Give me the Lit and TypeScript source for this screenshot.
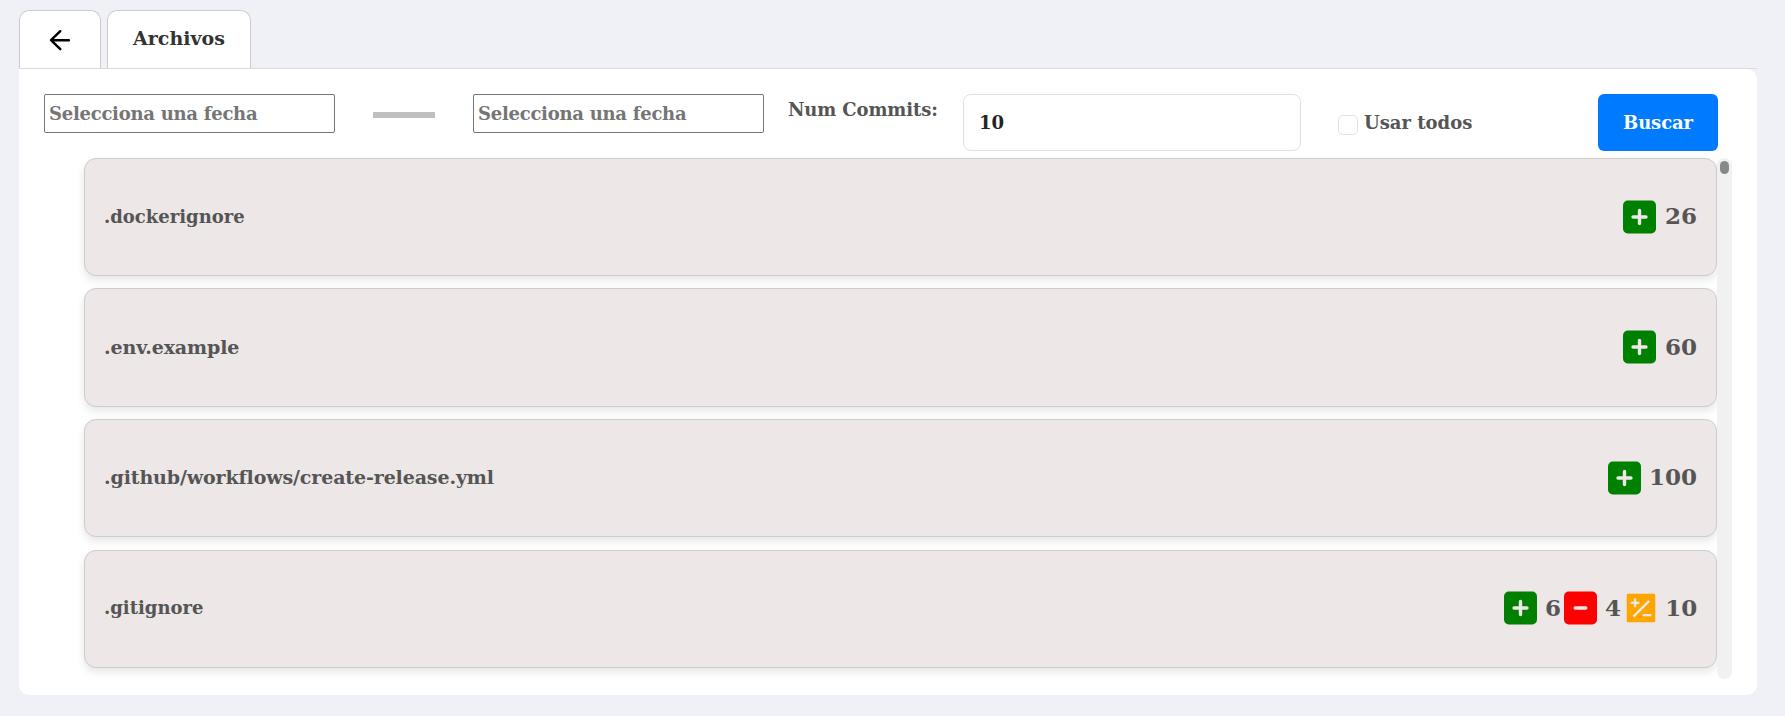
import { LitElement, html, css, svg } from "lit";
import { customElement, property } from "lit/decorators.js";

type Kind = "add" | "del" | "mod";
interface Stat { kind: Kind; value: number; }
interface FileEntry { name: string; stats: Stat[]; cls: string; }

const FILES: FileEntry[] = [
  { name: ".dockerignore", cls: "snug", stats: [{ kind: "add", value: 26 }] },
  { name: ".env.example", cls: "wide", stats: [{ kind: "add", value: 60 }] },
  { name: ".github/workflows/create-release.yml", cls: "wide", stats: [{ kind: "add", value: 100 }] },
  {
    name: ".gitignore", cls: "snug",
    stats: [{ kind: "add", value: 6 }, { kind: "del", value: 4 }, { kind: "mod", value: 10 }],
  },
];

@customElement("stat-icon")
export class StatIcon extends LitElement {
  @property() kind: Kind = "add";

  static styles = css`
    :host { display: block; height: 38px; }
    svg { display: block; height: 38px; }
    .square { width: 33px; }
    .exposure { width: 38px; }
    .add { fill: #008000; }
    .del { fill: #ff0000; }
    .mod { fill: #ffa500; }
    .mark { fill: none; stroke: #ede7e7; }
  `;

  render() {
    if (this.kind === "mod") {
      return html`<svg class="exposure" viewBox="0 0 24 24">
        <rect class="mod" x="3" y="3" width="18" height="18" rx="0.8"></rect>
        <path class="mark" stroke-width="1.5" d="M5.5 8.75h5.5M8.25 6v5.5M17.2 7.5L7.2 17.5M13 16.5h5.5"></path>
      </svg>`;
    }
    const mark = this.kind === "add"
      ? svg`<path class="mark" stroke-width="46" stroke-linecap="round" d="M136 256H312M224 168V344"></path>`
      : svg`<path class="mark" stroke-width="46" stroke-linecap="round" d="M152 256H296"></path>`;
    return html`<svg class="square" viewBox="0 0 448 512">
      <rect class=${this.kind} x="0" y="32" width="448" height="448" rx="64"></rect>${mark}
    </svg>`;
  }
}

@customElement("app-root")
export class AppRoot extends LitElement {
  static styles = css`
    :host {
      display: block;
      box-sizing: border-box;
      height: 716px;
      padding: 10px 28px 21px 19px;
      background: #f0f1f6;
      color: #555;
      font: bold 18px "DejaVu Serif", serif;
      overflow: hidden;
    }
    * { box-sizing: border-box; }
    .tabs { display: flex; gap: 6px; height: 59px; border-bottom: 1px solid #dcdcde; }
    .tab {
      display: flex; align-items: center; justify-content: center;
      height: 58px; border: 1px solid #ccc; border-bottom: 0;
      border-radius: 10px 10px 0 0; background: #fff; color: #333; white-space: nowrap;
    }
    .back { width: 82px; }
    .back svg { display: block; width: 24px; height: 24px; }
    .files-tab { width: 144px; padding: 0 0 3px; font-size: 19px; }
    .panel {
      height: 626px; padding: 25px 25px 0; background: #fff;
      border-radius: 0 10px 10px 10px;
    }
    .filters { display: flex; align-items: flex-start; height: 57px; white-space: nowrap; }
    input { font: inherit; outline: 0; }
    .date {
      width: 291px; height: 39px; padding: 0 4px 1px; letter-spacing: -0.26px;
      border: 1px solid #767676; border-radius: 2px; background: #fff;
    }
    .date::placeholder { color: #757575; opacity: 1; }
    .dash { width: 62px; height: 6px; margin: 18px 38px 0; background: #bfbfbf; }
    .label { width: 175px; margin-left: 24px; line-height: 31px; letter-spacing: -0.13px; }
    .count {
      width: 338px; height: 57px; padding: 0 15px 1px;
      border: 1px solid #dee2e6; border-radius: 8px; background: #fff; color: #212529;
    }
    .all { display: flex; align-items: center; height: 57px; margin-left: 37px; gap: 6px; }
    .all-text { padding-bottom: 1px; }
    .check {
      appearance: none; width: 20px; height: 20px; margin: 5px 0 0;
      border: 1px solid #dee2e6; border-radius: 5px; background: #fff;
    }
    .search {
      width: 120px; height: 57px; margin: 0 14px 0 auto; padding: 0 0 1px; border: 0;
      border-radius: 6px; background: #007bff; color: #fff; font: inherit; letter-spacing: -0.1px;
    }
    .scroller { display: flex; height: 521px; margin: 7px 0 0; }
    .list {
      display: flex; flex-direction: column; gap: 12.2px; flex: none;
      width: 1673px; padding: 0 0 0 40px; margin-top: -0.2px;
    }
    .card {
      display: flex; align-items: center; justify-content: space-between; flex: none;
      height: 118.4px; padding: 0 19px 0 19px;
      border: 1px solid #ccc; border-radius: 12px; background: #ede7e7;
      box-shadow: 0 4px 8px rgba(0, 0, 0, 0.1);
    }
    .name { padding-bottom: 2px; }
    .wide { font-size: 19px; letter-spacing: -0.12px; }
    .stats { display: flex; align-items: center; padding-bottom: 1px; }
    .stat { display: flex; align-items: center; }
    .value { padding: 0 0 1px 8px; font: bold 23px/30px "DejaVu Serif", serif; }
    .add .value { min-width: 27px; }
    .add:only-child .value { min-width: 41px; text-align: right; }
    .del .value { width: 25.3px; }
    .mod .value { width: 36.7px; padding-left: 5px; }
    .track { width: 15px; height: 521px; padding: 3px; border-radius: 8px; background: #f1f1f1; }
    .thumb { width: 9px; height: 13px; border-radius: 5px; background: #888; }
  `;

  render() {
    return html`
      <nav class="tabs">
        <div class="tab back">
          <svg viewBox="0 0 24 24" fill="none" stroke="#000" stroke-width="2.4" stroke-linecap="round" stroke-linejoin="round">
            <path d="M20.9 12.2H3.2M12.3 3.2L3 12.2l9.3 9"></path>
          </svg>
        </div>
        <div class="tab files-tab">Archivos</div>
      </nav>
      <main class="panel">
        <div class="filters">
          <input class="date" placeholder="Selecciona una fecha" />
          <div class="dash"></div>
          <input class="date" placeholder="Selecciona una fecha" />
          <label class="label">Num Commits:</label>
          <input class="count" .value=${"10"} />
          <label class="all"><input class="check" type="checkbox" /><span class="all-text">Usar todos</span></label>
          <button class="search">Buscar</button>
        </div>
        <div class="scroller">
          <div class="list">
            ${FILES.map((f) => html`
              <div class="card">
                <span class="name ${f.cls}">${f.name}</span>
                <div class="stats">
                  ${f.stats.map((s) => html`<div class="stat ${s.kind}">
                    <stat-icon .kind=${s.kind}></stat-icon><span class="value">${s.value}</span>
                  </div>`)}
                </div>
              </div>`)}
          </div>
          <div class="track"><div class="thumb"></div></div>
        </div>
      </main>
    `;
  }
}
